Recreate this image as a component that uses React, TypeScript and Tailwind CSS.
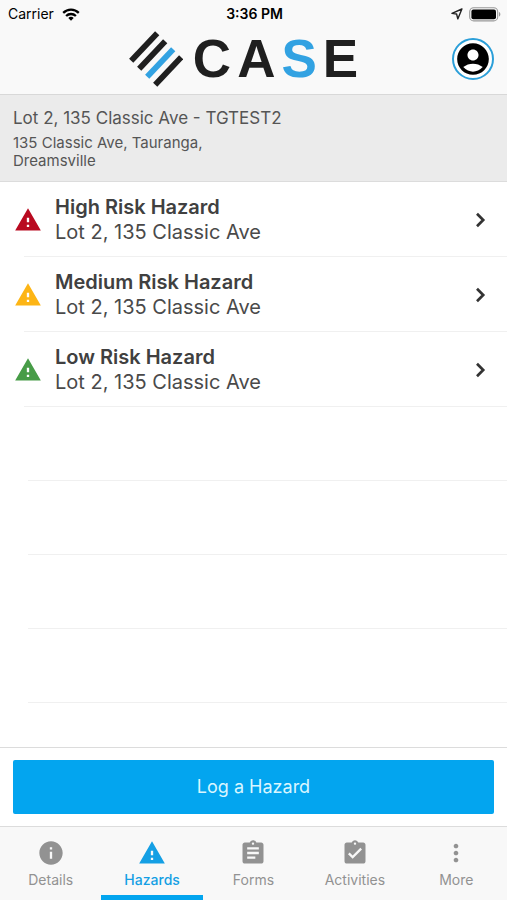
import React, { useState } from 'react';
import {
  MdAccountCircle,
  MdAssignment,
  MdAssignmentTurnedIn,
  MdInfo,
  MdMoreVert,
  MdWarning,
} from 'react-icons/md';
import type { IconType } from 'react-icons';

type Tab = 'Details' | 'Hazards' | 'Forms' | 'Activities' | 'More';

type Hazard = {
  title: string;
  location: string;
  color: string;
};

const hazards: Hazard[] = [
  { title: 'High Risk Hazard', location: 'Lot 2, 135 Classic Ave', color: 'text-[#b90a20]' },
  { title: 'Medium Risk Hazard', location: 'Lot 2, 135 Classic Ave', color: 'text-[#fdb515]' },
  { title: 'Low Risk Hazard', location: 'Lot 2, 135 Classic Ave', color: 'text-[#479c47]' },
];

const tabs: { name: Tab; icon: IconType }[] = [
  { name: 'Details', icon: MdInfo },
  { name: 'Hazards', icon: MdWarning },
  { name: 'Forms', icon: MdAssignment },
  { name: 'Activities', icon: MdAssignmentTurnedIn },
  { name: 'More', icon: MdMoreVert },
];

const WifiIcon = () => (
  <svg viewBox="0 0 18 13" className="w-[18px] h-[13px]" fill="none" stroke="black" strokeWidth="2.3">
    <path d="M1.2 4.9C5.6 .6 12.4 .6 16.8 4.9" />
    <path d="M4.1 8C6.9 5.3 11.1 5.3 13.9 8" />
    <path d="M9 12.7L6.3 9.9C7.8 8.5 10.2 8.5 11.7 9.9Z" fill="black" stroke="none" />
  </svg>
);

const LocationIcon = () => (
  <svg viewBox="0 0 12 12" className="w-3 h-3" fill="none" stroke="#222" strokeWidth="1.4" strokeLinejoin="round">
    <path d="M10.9 1L1 5.4L5.6 6L6.8 10.9Z" />
  </svg>
);

const BatteryIcon = () => (
  <svg viewBox="0 0 32 15" className="w-8 h-[15px]">
    <rect x=".7" y=".7" width="28" height="13.2" rx="4" fill="none" stroke="#999" strokeWidth="1.1" />
    <rect x="2.4" y="2.4" width="24.6" height="9.8" rx="2" fill="black" />
    <path d="M30 5V9.6C31.8 9 31.8 5.6 30 5Z" fill="#999" />
  </svg>
);

const ChevronIcon = () => (
  <svg viewBox="0 0 28 28" className="w-7 h-7 mr-[13px]" fill="none" stroke="#333" strokeWidth="2.7">
    <path d="M11 7.8L17.2 14L11 20.2" />
  </svg>
);

const LogoMark = () => (
  <svg viewBox="0 0 54 56" className="w-[54px] h-14" fill="none" stroke="#1f1f1f" strokeWidth="5.8">
    <path d="M2.2 29.8L28.2 2.2" />
    <path d="M10.2 37.8L36.2 10.2" />
    <path d="M18.2 45.8L44.2 18.2" stroke="#32a2e2" />
    <path d="M26.2 53.8L52.2 26.2" />
  </svg>
);

const StatusBar = () => (
  <div className="grid grid-cols-3 items-center h-7 pl-2 pr-[6px] text-sm text-black">
    <div className="flex items-center gap-2">
      Carrier
      <WifiIcon />
    </div>
    <span className="text-center font-semibold">3:36 PM</span>
    <div className="flex items-center justify-end gap-[6px]">
      <LocationIcon />
      <BatteryIcon />
    </div>
  </div>
);

const Header = () => (
  <header className="bg-[#f9f9f9] border-b border-[#d8d8d8]">
    <StatusBar />
    <div className="grid grid-cols-[1fr_auto_1fr] items-center h-[66px] px-[13px] pb-1">
      <div className="col-start-2 flex items-center gap-[10px] pr-5">
        <LogoMark />
        <h1 className="flex gap-[6px] font-['Liberation_Sans',sans-serif] font-bold text-[53px] leading-[56px] text-[#1f1f1f]">
          <span>C</span>
          <span>A</span>
          <span className="text-[#32a2e2]">S</span>
          <span>E</span>
        </h1>
      </div>
      <button
        aria-label="Account"
        className="justify-self-end flex items-center justify-center w-[42px] h-[42px] rounded-full border-2 border-[#2b9fd9] bg-white"
      >
        <MdAccountCircle className="w-[38px] h-[38px] shrink-0 text-black" />
      </button>
    </div>
  </header>
);

const HazardRow = ({ title, location, color }: Hazard) => (
  <li className="flex h-[75px]">
    <button className="flex flex-1 items-center text-left">
      <MdWarning className={`w-7 h-7 ml-[14px] mr-[13px] shrink-0 ${color}`} />
      <span className="flex-1 text-xl leading-[25px] text-[#4a4a4a]">
        <span className="block font-semibold text-[#404040]">{title}</span>
        <span className="block">{location}</span>
      </span>
      <ChevronIcon />
    </button>
  </li>
);

const App: React.FC = () => {
  const [activeTab, setActiveTab] = useState<Tab>('Hazards');

  return (
    <div className="min-h-screen flex flex-col bg-white font-[Inter,sans-serif]">
      <Header />

      <section className="px-[13px] py-[11px] bg-[#ebebeb] border-b border-[#dcdcdc] text-[#555]">
        <h2 className="text-[17px] leading-6">Lot 2, 135 Classic Ave - TGTEST2</h2>
        <p className="mt-1 text-[15px] leading-[18px]">
          135 Classic Ave, Tauranga,
          <br />
          Dreamsville
        </p>
      </section>

      <main className="flex-1">
        <ul>
          {hazards.map((hazard) => (
            <React.Fragment key={hazard.title}>
              <HazardRow {...hazard} />
              <li role="separator" className="ml-6 -mt-px border-b border-[#f0f0f0]" />
            </React.Fragment>
          ))}
        </ul>
        {/* Blank rows that fill the rest of the table */}
        {[0, 1, 2, 3].map((row) => (
          <div key={row} className="h-[74px] ml-7 border-b border-[#f0f0f0]" />
        ))}
      </main>

      <div className="px-[13px] py-3 border-y border-[#dcdcdc]">
        <button className="w-full h-[54px] rounded-xs bg-[#03a5ef] text-lg text-[#d9f6ff]">Log a Hazard</button>
      </div>

      <nav className="grid grid-cols-5 h-[73px] bg-[#f8f8f8]">
        {tabs.map(({ name, icon: Icon }) => (
          <button
            key={name}
            onClick={() => setActiveTab(name)}
            className={`flex flex-col items-center pt-3 border-b-[5px] text-sm leading-5 ${
              activeTab === name
                ? 'border-[#03a5ef] text-[#149fe4] font-medium'
                : 'border-transparent text-[#929292]'
            }`}
          >
            <Icon className="w-7 h-7 mb-[3px]" />
            {name}
          </button>
        ))}
      </nav>
    </div>
  );
};

export default App;
